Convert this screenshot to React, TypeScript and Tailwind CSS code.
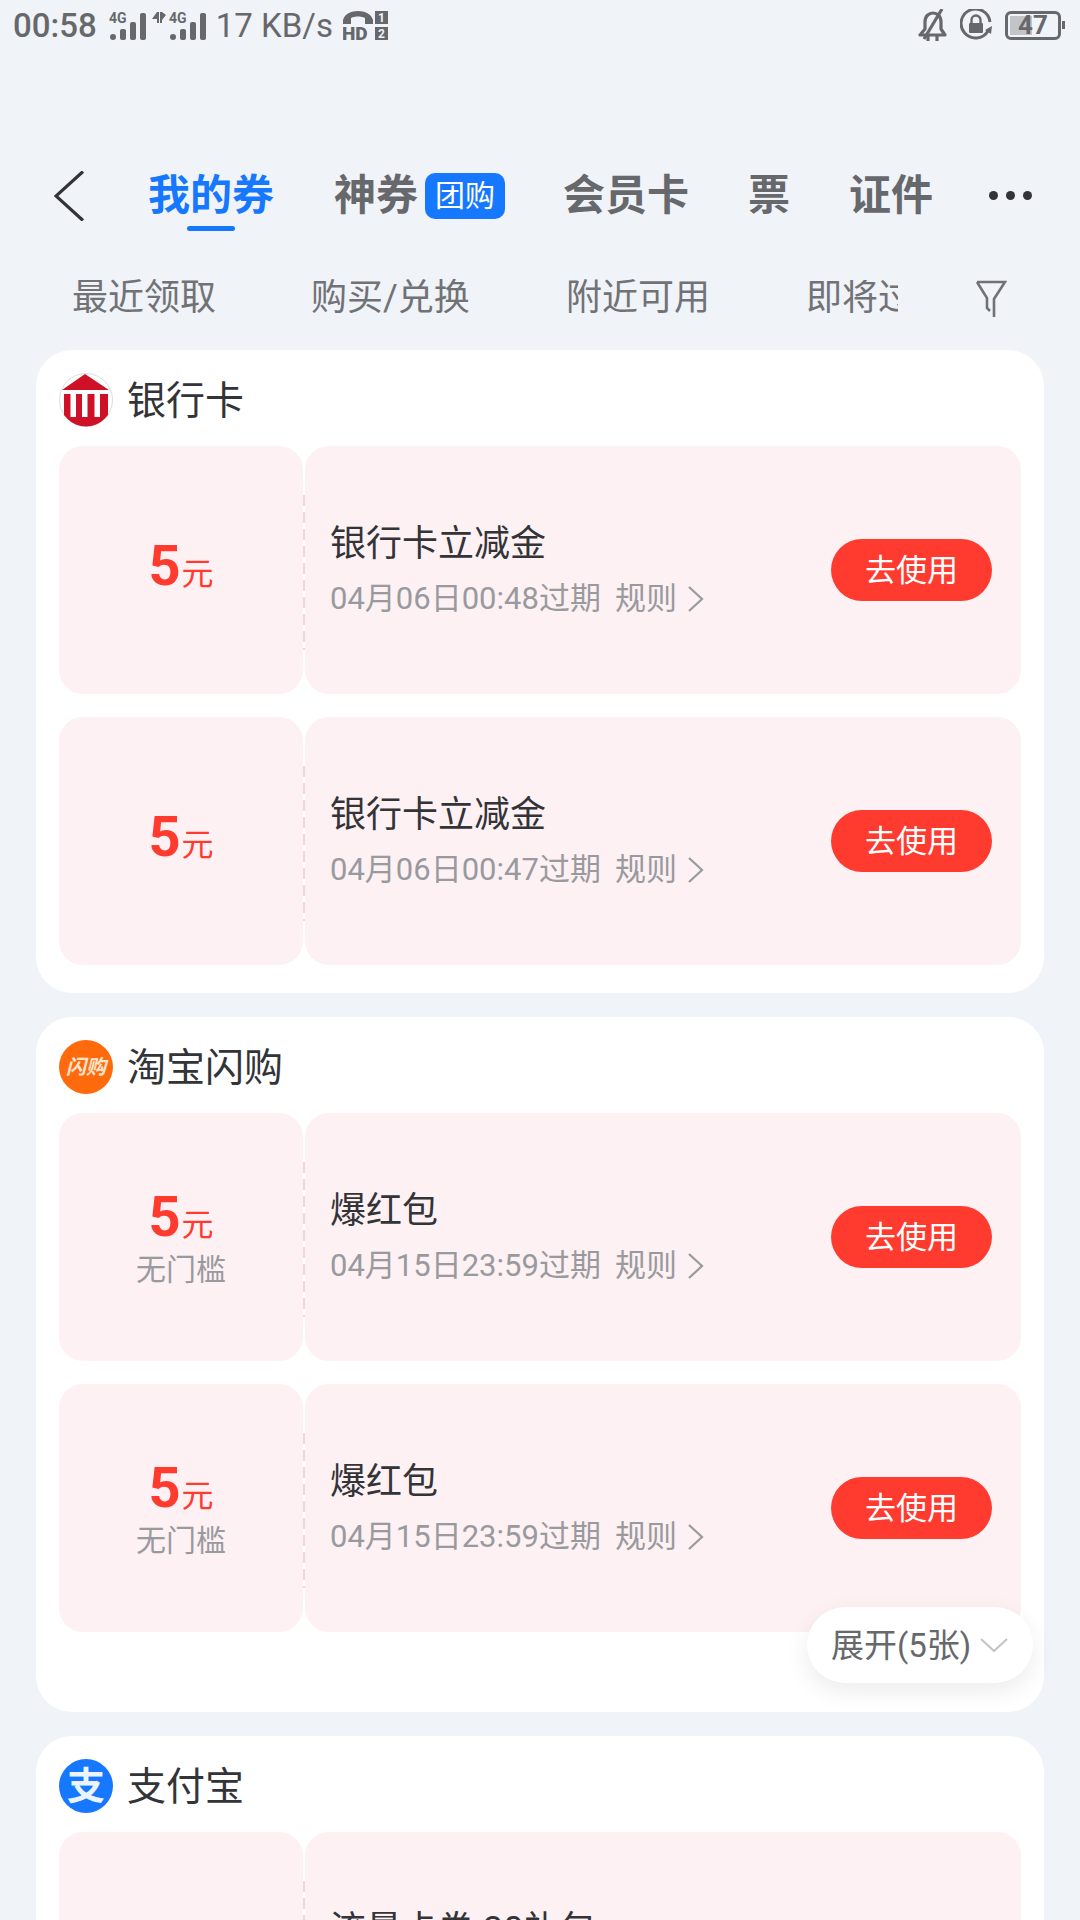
import React from "react";

const font = "font-['Roboto','Noto_Sans_CJK_SC',sans-serif]";

const Bars = () => (
  <>
    <text x="0" y="13" fontSize="14" fontWeight="700" fontFamily="Roboto">4G</text>
    <rect x="1" y="24" width="6" height="6" rx="3" />
    <rect x="11" y="19" width="6" height="11" rx="2" />
    <rect x="21" y="12" width="6" height="18" rx="2" />
    <rect x="31" y="3" width="6" height="27" rx="2" />
  </>
);

const StatusBar = () => (
  <div className="h-[50px] flex items-center pl-[13px] pr-[15px] text-[#66686c]">
    <span className="text-[33px] font-medium leading-none">00:58</span>
    <svg width="38" height="30" viewBox="0 0 38 30" fill="#66686c" className="ml-[12px] shrink-0">
      <Bars />
    </svg>
    <svg width="54" height="30" viewBox="0 0 54 30" fill="#66686c" className="ml-[5px] shrink-0">
      <path d="M5 2 L0 9 H5Z M5 10 V13 H7 V2 H5 M8 2 V13 H10 V10 L14 5 L10 2Z" />
      <g transform="translate(17 0)">
        <Bars />
      </g>
    </svg>
    <span className="ml-[10px] text-[33px] leading-none">17 KB/s</span>
    <svg width="45" height="30" viewBox="0 0 45 30" className="ml-[10px] shrink-0" fill="#66686c">
      <path d="M0 10 C3 -2 27 -2 30 10 L30 14 L22 14 L22 8 C18 6 12 6 8 8 L8 14 L0 14Z" />
      <text x="-1" y="30" fontSize="19" fontWeight="900" fontFamily="Roboto">HD</text>
      <rect x="32" y="1" width="13" height="13" />
      <rect x="32" y="17" width="13" height="13" />
      <text x="35" y="12" fontSize="12" fontWeight="700" fill="#f0f3f8" fontFamily="Roboto">1</text>
      <text x="35" y="28" fontSize="12" fontWeight="700" fill="#f0f3f8" fontFamily="Roboto">2</text>
    </svg>
    <div className="flex-1" />
    <svg width="30" height="32" viewBox="0 0 30 32" fill="none" stroke="#66686c" strokeWidth="3.2">
      <path d="M2 26 H27 L23 20 V13 C23 7 19 4 15 4 C11 4 7 7 7 13 V20Z" strokeLinejoin="round" />
      <path d="M24 0 L6 30" />
      <path d="M10 27 V32 M19 27 V32" />
    </svg>
    <svg width="32" height="32" viewBox="0 0 32 32" className="ml-[12px]" fill="none">
      <path d="M28 22 A14.5 14.5 0 1 1 30 13" stroke="#66686c" strokeWidth="3" />
      <path d="M25 21 L32 17 L31 25Z" fill="#66686c" />
      <rect x="9" y="14" width="14" height="10" rx="1" fill="#66686c" />
      <path d="M11.5 14 V11 A4.5 4.5 0 0 1 20.5 11 V14" stroke="#66686c" strokeWidth="2.4" />
    </svg>
    <div className="ml-[13px] flex items-center">
      <div className="relative w-[56px] h-[29px] rounded-[6px] border-[3px] border-[#66686c] overflow-hidden flex items-center justify-center">
        <div className="absolute left-[2px] top-[2px] bottom-[2px] w-[22px] bg-[#c2c4c8]" />
        <span className="relative text-[26px] font-bold leading-none">47</span>
      </div>
      <div className="ml-[1px] w-[3px] h-[8px] bg-[#66686c]" />
    </div>
  </div>
);

const NavTabs = () => (
  <div className="mt-[112px] h-[67px] flex items-center">
    <svg width="32" height="50" viewBox="0 0 32 50" fill="none" stroke="#333438" strokeWidth="3.2" className="ml-[54px] shrink-0">
      <path d="M29 0.5 L2 25 L29 49.5" />
    </svg>
    <div className="relative ml-[62px] text-[42px] leading-none font-bold text-[#1677ff]">
      我的券
      <div className="absolute left-[39px] top-[51px] w-[48px] h-[5px] rounded-full bg-[#1677ff]" />
    </div>
    <span className="ml-[60px] text-[42px] leading-none font-bold text-[#66686c]">神券</span>
    <span className="ml-[7px] w-[80px] h-[46px] rounded-[10px] bg-[#1677ff] text-white text-[30px] leading-none flex items-center justify-center">团购</span>
    <span className="ml-[58px] text-[42px] leading-none font-bold text-[#66686c]">会员卡</span>
    <span className="ml-[59px] text-[42px] leading-none font-bold text-[#66686c]">票</span>
    <span className="ml-[59px] text-[42px] leading-none font-bold text-[#66686c]">证件</span>
    <div className="ml-[56px] flex gap-[8px]">
      <div className="w-[9px] h-[9px] rounded-full bg-[#333438]" />
      <div className="w-[9px] h-[9px] rounded-full bg-[#333438]" />
      <div className="w-[9px] h-[9px] rounded-full bg-[#333438]" />
    </div>
  </div>
);

const Filters = () => (
  <div className="mt-[44px] h-[50px] flex items-center text-[36px] leading-none text-[#707276]">
    <span className="ml-[72px]">最近领取</span>
    <span className="ml-[95px]">购买/兑换</span>
    <span className="ml-[96px]">附近可用</span>
    <div className="ml-[96px] w-[92px] overflow-hidden whitespace-nowrap">即将过期</div>
    <svg width="32" height="38" viewBox="0 0 32 38" fill="none" stroke="#707276" strokeWidth="2.6" className="ml-[77px] mt-[2px]">
      <path d="M2 2 H30 L19 19 V37 M2 2 L12 18 V28 L15 31" />
    </svg>
  </div>
);

const BankLogo = () => (
  <svg width="54" height="54" viewBox="0 0 54 54">
    <defs>
      <clipPath id="bank-circle">
        <circle cx="27" cy="27" r="26.5" />
      </clipPath>
    </defs>
    <circle cx="27" cy="27" r="26.5" fill="#fff" stroke="#dddddd" />
    <g clipPath="url(#bank-circle)" fill="#ce1126">
      <path d="M3 17 L26 1 L50 17Z" />
      <rect x="5" y="21" width="44" height="34" />
    </g>
    <rect x="11.5" y="21" width="5.5" height="23" fill="#fff" />
    <rect x="23" y="21" width="5.5" height="23" fill="#fff" />
    <rect x="35.5" y="21" width="5.5" height="23" fill="#fff" />
  </svg>
);

const ShanGouLogo = () => (
  <div className="w-[54px] h-[54px] rounded-full bg-[#ff6a0c] flex items-center justify-center text-[#fde4cd] text-[20px] font-bold italic leading-none">
    闪购
  </div>
);

const AlipayLogo = () => (
  <div className="w-[54px] h-[54px] rounded-full bg-[#1677ff] flex items-center justify-center text-[#eaf3ff] text-[38px] font-bold leading-none">
    支
  </div>
);

type CouponProps = { title: string; date: string; sub?: string };

const Coupon = ({ title, date, sub }: CouponProps) => (
  <div className="flex h-[248px] gap-[2px]">
    <div className="w-[244px] shrink-0 rounded-[24px] bg-[#fef1f4] flex flex-col items-center justify-center">
      <div className={`flex items-baseline text-[#ff3b30] leading-none ${sub ? "" : "mt-[-8px]"}`}>
        <span className="text-[56px] font-bold leading-none">5</span>
        <span className="ml-[1px] text-[32px] leading-none">元</span>
      </div>
      {sub && <div className="mt-[10px] text-[30px] leading-none text-[#999a9e]">{sub}</div>}
    </div>
    <div className="relative flex-1 rounded-[24px] bg-[#fef1f4] flex items-center pl-[25px] pr-[29px]">
      <div className="absolute left-[-2px] top-[49px] bottom-[44px] w-[2px] bg-[repeating-linear-gradient(to_bottom,#f5d5dc_0,#f5d5dc_11px,transparent_11px,transparent_17px)]" />
      <div className="flex-1">
        <div className="text-[36px] leading-none text-[#333438]">{title}</div>
        <div className="mt-[21px] flex items-center text-[31px] leading-none text-[#999a9e]">
          <span>{date}</span>
          <span className="ml-[14px]">规则</span>
          <svg width="17" height="26" viewBox="0 0 17 26" fill="none" stroke="#999a9e" strokeWidth="2.2" className="ml-[10px]">
            <path d="M2 1 L15 13 L2 25" />
          </svg>
        </div>
      </div>
      <div className="w-[161px] h-[62px] rounded-full bg-[#ff3b30] text-white text-[31px] leading-none flex items-center justify-center">
        去使用
      </div>
    </div>
  </div>
);

const Section = ({ logo, name, children }: { logo: React.ReactNode; name: string; children: React.ReactNode }) => (
  <div className="relative mx-[36px] rounded-[36px] bg-white px-[23px] pt-[23px]">
    <div className="h-[54px] flex items-center gap-[14px] text-[39px] leading-none text-[#333438]">
      {logo}
      <span className="mt-[2px]">{name}</span>
    </div>
    {children}
  </div>
);

export default function App() {
  return (
    <div className={`h-[1920px] w-[1080px] overflow-hidden bg-[#f0f3f8] ${font}`}>
      <StatusBar />
      <NavTabs />
      <Filters />
      <div className="mt-[27px] flex flex-col gap-[24px]">
        <Section logo={<BankLogo />} name="银行卡">
          <div className="mt-[19px] pb-[28px] flex flex-col gap-[23px]">
            <Coupon title="银行卡立减金" date="04月06日00:48过期" />
            <Coupon title="银行卡立减金" date="04月06日00:47过期" />
          </div>
        </Section>
        <Section logo={<ShanGouLogo />} name="淘宝闪购">
          <div className="mt-[19px] pb-[80px] flex flex-col gap-[23px]">
            <Coupon title="爆红包" date="04月15日23:59过期" sub="无门槛" />
            <Coupon title="爆红包" date="04月15日23:59过期" sub="无门槛" />
          </div>
          <div className="absolute left-[771px] top-[590px] w-[226px] h-[76px] rounded-full bg-white shadow-[0_8px_24px_rgba(0,0,0,0.08)] flex items-center pl-[24px] text-[33px] leading-none text-[#66686c]">
            <span>展开(5张)</span>
            <svg width="28" height="16" viewBox="0 0 28 16" fill="none" stroke="#c4c5c8" strokeWidth="2.2" className="ml-[9px]">
              <path d="M1 2 L14 14 L27 2" />
            </svg>
          </div>
        </Section>
        <Section logo={<AlipayLogo />} name="支付宝">
          <div className="mt-[19px] pb-[28px] flex flex-col gap-[23px]">
            <Coupon title="流量卡券 30礼包" date="04月30日23:59过期" />
          </div>
        </Section>
      </div>
    </div>
  );
}
